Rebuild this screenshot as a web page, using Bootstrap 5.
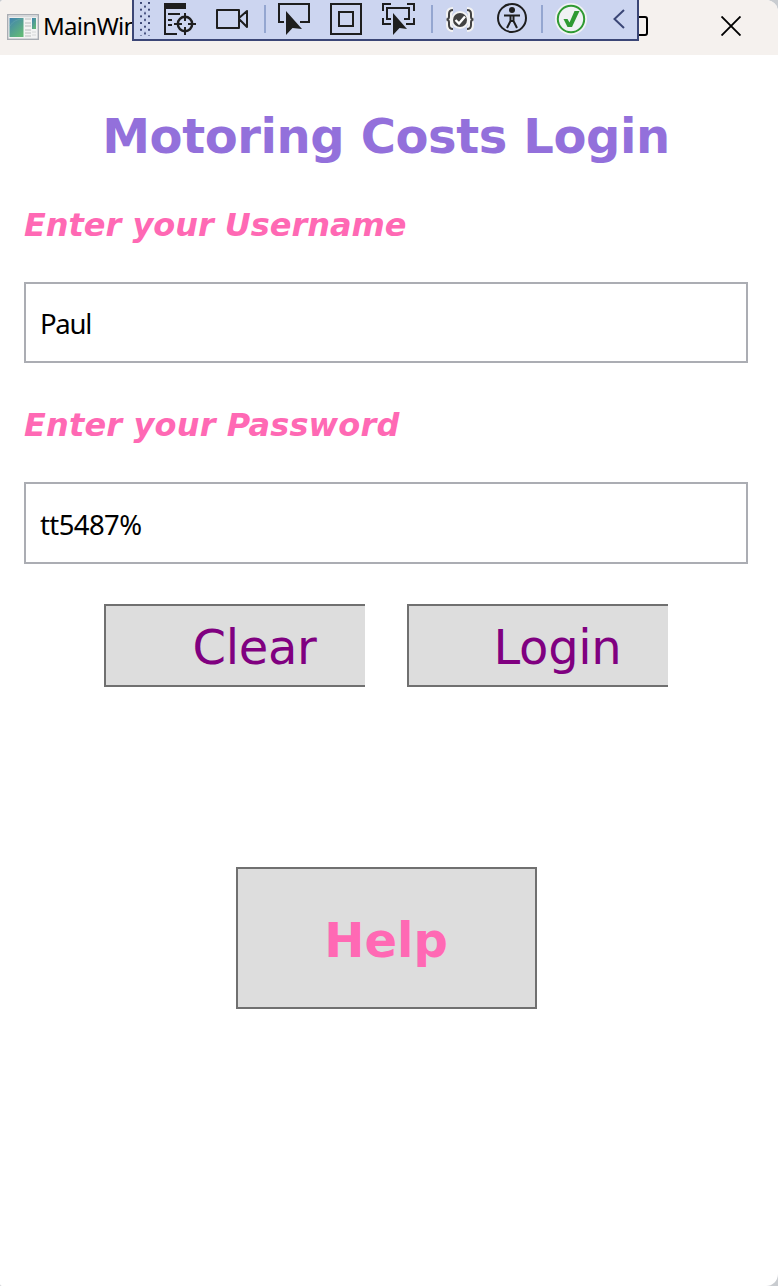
<!DOCTYPE html>
<html lang="en">
<head>
<meta charset="utf-8">
<meta name="viewport" content="width=device-width, initial-scale=1">
<title>MainWindow</title>
<link href="https://cdn.jsdelivr.net/npm/bootstrap@5.3.0/dist/css/bootstrap.min.css" rel="stylesheet">
<style>
  body { background: #c9ccd0; font-family: "Noto Sans", "Open Sans", sans-serif; color: #000; }
  .app-window { height: 1286px; background: #fff; border-radius: 4px 12px 12px 2px; overflow: hidden; }
  .title-bar { height: 55px; background: #f5f1ee; padding: 0 37px 3px 7px; }
  .title-text { font-size: 24px; line-height: 30px; letter-spacing: -.7px; margin-left: 4px; white-space: nowrap; }
  .title-bar svg:first-child { margin-top: 1px; }
  .debug-bar { left: 132px; top: 0; width: 507px; height: 41px; background: #ccd5f0; border: 2px solid #3b4676; border-top: 0; padding-left: 6px; }
  .tool-sep { width: 2px; height: 28px; background: #94a6d0; margin-top: 5px; }
  .debug-bar svg { display: block; flex: none; }
  .form-area { padding: 0 30px 0 24px; font-family: "DejaVu Sans", sans-serif; }
  .app-heading { font-size: 48px; line-height: 56px; font-weight: 700; color: #9370db; letter-spacing: -.4px; margin: 53px 0 0; }
  .field-label { font-size: 32px; line-height: 40px; font-weight: 700; font-style: italic; color: #ff69b4; letter-spacing: -.03px; margin: 0; }
  .field-box { height: 81px; border: 2px solid #abadb3; border-radius: 0; padding: 1px 14px 0; font: 27.5px "Noto Sans", "Open Sans", sans-serif; letter-spacing: -1.3px; color: #000; }
  .wpf-btn { background: #ddd; border: 2px solid #707070; border-radius: 0; padding: 0; font-size: 48px; line-height: 56px; }
  .clip-btn { width: 261px; height: 83px; border-right: 0; color: purple; padding: 2px 0 0 38px; letter-spacing: -.3px; }
  .help-btn { width: 301px; height: 142px; color: #ff69b4; font-weight: 700; padding-top: 4px; }
</style>
</head>
<body>
<main class="app-window position-relative">
  <header class="title-bar d-flex align-items-center">
    <svg width="32" height="26" viewBox="0 0 32 26">
      <defs><linearGradient id="pane" x1="0" y1="0" x2=".7" y2="1"><stop stop-color="#4182b0"/><stop offset="1" stop-color="#61b878"/></linearGradient></defs>
      <rect x=".7" y=".7" width="30.6" height="24.6" fill="#f3f3f3" stroke="#a9adb3" stroke-width="1.4"/>
      <path d="M2 2.700h28" stroke="#cfd2d4"/>
      <rect x="2.500" y="4" width="14" height="19" fill="url(#pane)"/>
      <path d="M3 12C6 7 11 5 16 5" fill="none" stroke="#65a6ae" opacity=".6"/>
      <path d="M18 5h6M18 9h6M18 12h6M18 16h6M18 19h6M18 22h6" stroke="#cdd0d0" stroke-width="1.300"/>
      <rect x="25" y="4" width="4" height="11" fill="url(#pane)"/>
      <path d="M25 18h4M25 21h4" stroke="#d6d8d8"/>
    </svg>
    <span class="title-text">MainWindow</span>
    <svg class="ms-auto" width="22" height="22" viewBox="0 0 22 22" style="margin-right:72px"><rect x="2" y="2" width="18" height="18" rx="2" fill="none" stroke="#000" stroke-width="2"/></svg>
    <svg width="20" height="20" viewBox="0 0 20 20" fill="none" stroke="#000" stroke-width="1.900"><path d="M.5 0.500l19 19M19.500.5l-19 19"/></svg>
  </header>

  <div class="debug-bar position-absolute d-flex align-items-start">
    <svg width="12" height="38" viewBox="0 0 12 38">
      <defs><pattern id="grip" width="8" height="6.700" patternUnits="userSpaceOnUse" y="2"><path d="M0 0h2v2H0zM4 3.500h2v2H4z" fill="#3b4676"/></pattern></defs>
      <rect y="2" width="10" height="34" fill="url(#grip)"/>
    </svg>
    <svg style="margin-left:12px" width="32" height="38" viewBox="0 0 32 38" fill="none" stroke="#1e1e1e" stroke-width="2">
      <path d="M0 3h22v6H0z" fill="#1e1e1e" stroke="none"/><path d="M1 8v26h12M4 14h12M4 20h4M4 25h4"/>
      <circle cx="21" cy="24" r="7.200" stroke-width="2.400"/><path d="M21 13v8M21 27v8M10 24h8M24 24h8"/>
    </svg>
    <svg style="margin-left:20px" width="32" height="38" viewBox="0 0 32 38" fill="none" stroke="#1e1e1e" stroke-width="2" stroke-linejoin="round">
      <path d="M1 10h22v18H1zM23 18l8-7v16l-8-8"/>
    </svg>
    <i class="tool-sep" style="margin-left:16px"></i>
    <svg style="margin-left:12px" width="32" height="38" viewBox="0 0 32 38">
      <path d="M6 22H1V4h30v18h-9" fill="none" stroke="#1e1e1e" stroke-width="2"/><path d="M8 11v24l6.500-7L24 29z" fill="#1e1e1e"/>
    </svg>
    <svg style="margin-left:20px" width="32" height="38" viewBox="0 0 32 38" fill="none" stroke="#1e1e1e" stroke-width="2">
      <path d="M1 4h30v30H1zM9 12h14v14H9z"/>
    </svg>
    <svg style="margin-left:20px" width="33" height="38" viewBox="0 0 33 38">
      <path d="M1 11V4h8M25 4h7v7M1 18v6h8M32 18v6h-8M9 19H5V8h22v11h-5" fill="none" stroke="#1e1e1e" stroke-width="2"/><path d="M11 13v22l6.500-7L25 29z" fill="#1e1e1e"/>
    </svg>
    <i class="tool-sep" style="margin-left:16px"></i>
    <svg style="margin-left:11px" width="32" height="38" viewBox="0 0 32 38" fill="none">
      <path d="M9 10Q5 10 5 14v2.500Q5 19.500 2.500 19.500 5 19.500 5 22.500V25q0 4 4 4M23 10q4 0 4 4v2.500q0 3 2.500 3-2.500 0-2.500 3V25q0 4-4 4" stroke="#f3f3f3" stroke-width="6"/><circle cx="16" cy="20" r="9" fill="#f3f3f3"/>
      <path d="M9 10Q5 10 5 14v2.500Q5 19.500 2.500 19.500 5 19.500 5 22.500V25q0 4 4 4M23 10q4 0 4 4v2.500q0 3 2.500 3-2.500 0-2.500 3V25q0 4-4 4" stroke="#424242" stroke-width="2"/>
      <circle cx="16" cy="20" r="7" fill="#424242"/><path d="M11.500 20l3.500 3.500 6-7" stroke="#fff" stroke-width="2.400"/>
    </svg>
    <svg style="margin-left:20px" width="32" height="38" viewBox="0 0 32 38" fill="none" stroke="#1e1e1e" stroke-width="2">
      <circle cx="16" cy="18" r="14"/><circle cx="16" cy="10" r="3" fill="#1e1e1e" stroke="none"/>
      <path d="M8 15.500h16M14.500 16v5l-3.500 7M17.500 16v5l3.500 7M14 21h4"/>
    </svg>
    <i class="tool-sep" style="margin-left:13px"></i>
    <svg style="margin-left:12px" width="32" height="38" viewBox="0 0 32 38" fill="none">
      <circle cx="16" cy="19" r="16" fill="#f0f2f4"/><circle cx="16" cy="19" r="13.200" stroke="#2f9a32" stroke-width="2"/>
      <path d="M8.500 19h4l2 3.500L19.500 11h5l-7.500 16h-4.500z" fill="#2f9a32"/>
    </svg>
    <svg style="margin-left:26px" width="13" height="38" viewBox="0 0 13 38" fill="none" stroke="#3b4676" stroke-width="2"><path d="M11 10l-9.500 9L11 28"/></svg>
  </div>

  <form class="form-area">
    <h1 class="app-heading text-center">Motoring Costs Login</h1>
    <label class="field-label d-block" for="user" style="margin-top:41px">Enter your Username</label>
    <input class="form-control field-box" id="user" type="text" value="Paul" style="margin-top:37px">
    <label class="field-label d-block" for="pass" style="margin-top:42px;letter-spacing:.16px">Enter your Password</label>
    <input class="form-control field-box" id="pass" type="text" value="tt5487%" style="margin-top:37px;height:82px;padding-top:2px;letter-spacing:-.6px">
    <div class="d-flex justify-content-center" style="gap:42px;margin-top:40px">
      <button class="btn wpf-btn clip-btn" type="button">Clear</button>
      <button class="btn wpf-btn clip-btn" type="button">Login</button>
    </div>
    <div class="text-center" style="margin-top:180px">
      <button class="btn wpf-btn help-btn" type="button">Help</button>
    </div>
  </form>
</main>
<script src="https://cdn.jsdelivr.net/npm/bootstrap@5.3.0/dist/js/bootstrap.bundle.min.js"></script>
</body>
</html>
